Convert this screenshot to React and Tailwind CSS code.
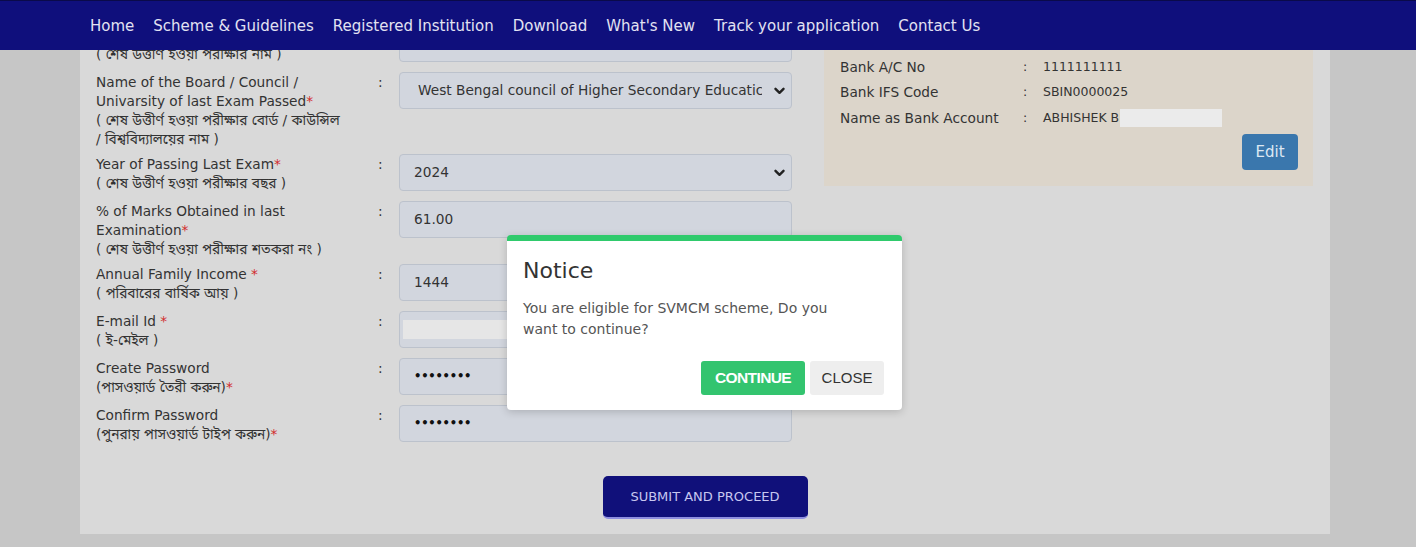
import React from "react";

const Star = () => <span className="text-[#d12b2b]">*</span>;

function Chevron() {
  return (
    <svg width="11" height="8" viewBox="0 0 11 8" className="shrink-0">
      <path d="M1.5 1.8 L5.5 5.8 L9.5 1.8" fill="none" stroke="#222" strokeWidth="2.4" strokeLinecap="round" strokeLinejoin="round" />
    </svg>
  );
}

function Field({ kind, value, redact, pl = "pl-[14px]" }) {
  if (kind === "select") {
    return (
      <div className={`h-[37px] rounded-[4px] border border-[#bcc2cc] bg-[#d2d6de] flex items-center ${pl} pr-[6px] text-[#333]`}>
        <span className="w-[344px] whitespace-nowrap overflow-hidden">{value}</span>
        <span className="flex-1" />
        <Chevron />
      </div>
    );
  }
  if (kind === "password") {
    return (
      <div className="h-[37px] rounded-[4px] border border-[#bcc2cc] bg-[#d2d6de] flex items-center pl-[14px] text-[#111] text-[11.5px] font-bold tracking-[-0.2px]">
        ••••••••
      </div>
    );
  }
  return (
    <div className="h-[37px] rounded-[4px] border border-[#bcc2cc] bg-[#d2d6de] flex items-center pl-[14px] text-[#333]">
      {redact ? <div className="w-[106px] h-[19px] bg-[#e6e6e6] -ml-[11px]" /> : value}
    </div>
  );
}

function Row({ lines, field, hideColon }) {
  return (
    <div className="grid grid-cols-[284px_19px_393px] mb-[6px]">
      <div className="text-[#333] translate-y-[1px]">
        {lines.map((l, i) => (
          <div key={i} className="h-[19px] leading-[19px] whitespace-nowrap overflow-visible">
            {l}
          </div>
        ))}
      </div>
      <div className="h-[19px] leading-[19px] text-[#333] -ml-[2px] translate-y-[1px]">{hideColon ? "" : ":"}</div>
      <div className="pb-[4px]">{field}</div>
    </div>
  );
}

export default function App() {
  const nav = [
    "Home",
    "Scheme & Guidelines",
    "Registered Institution",
    "Download",
    "What's New",
    "Track your application",
    "Contact Us",
  ];
  const font = "font-['DejaVu_Sans','Noto_Sans_Bengali','Noto_Sans',sans-serif]";
  return (
    <div className={`w-[1420px] h-[556px] bg-white overflow-hidden ${font}`}>
      <div className="w-[1416px] h-[547px] bg-[#c6c6c6] flex flex-col relative">
        <div className="h-[50px] shrink-0 bg-[#0f0f7c] border-t border-[#0a0a4a] flex items-center pl-[90px] gap-[19px] text-[15px] text-[#e2e2f2] pt-[1px]">
          {nav.map((n) => (
            <span key={n} className="whitespace-nowrap">{n}</span>
          ))}
        </div>

        <div className="ml-[80px] w-[1250px] h-[484px] bg-[#d9d9d9] overflow-hidden text-[13.7px]">
          <div className="-mt-[25px] flex pl-[16px]">
            <div className="w-[696px]">
              <Row
                hideColon
                lines={["", "( শেষ উত্তীর্ণ হওয়া পরীক্ষার নাম )"]}
                field={<Field kind="input" value="" />}
              />
              <Row
                lines={[
                  "Name of the Board / Council /",
                  <>Univarsity of last Exam Passed<Star /></>,
                  "( শেষ উত্তীর্ণ হওয়া পরীক্ষার বোর্ড / কাউন্সিল",
                  "/ বিশ্ববিদ্যালয়ের নাম )",
                ]}
                field={<Field kind="select" pl="pl-[18px]" value="West Bengal council of Higher Secondary Educatic" />}
              />
              <Row
                lines={[
                  <>Year of Passing Last Exam<Star /></>,
                  "( শেষ উত্তীর্ণ হওয়া পরীক্ষার বছর )",
                ]}
                field={<Field kind="select" pl="pl-[14px]" value="2024" />}
              />
              <Row
                lines={[
                  "% of Marks Obtained in last",
                  <>Examination<Star /></>,
                  "( শেষ উত্তীর্ণ হওয়া পরীক্ষার শতকরা নং )",
                ]}
                field={<Field kind="input" value="61.00" />}
              />
              <Row
                lines={[
                  <>Annual Family Income <Star /></>,
                  "( পরিবারের বার্ষিক আয় )",
                ]}
                field={<Field kind="input" value="1444" />}
              />
              <Row
                lines={[<>E-mail Id <Star /></>, "( ই-মেইল )"]}
                field={<Field kind="input" redact />}
              />
              <Row
                lines={["Create Password", <>(পাসওয়ার্ড তৈরী করুন)<Star /></>]}
                field={<Field kind="password" />}
              />
              <Row
                lines={["Confirm Password", <>(পুনরায় পাসওয়ার্ড টাইপ করুন)<Star /></>]}
                field={<Field kind="password" />}
              />
            </div>

            <div className="ml-[32px] w-[489px] self-start bg-[#dcd5ca] pt-[30px] pb-[16px] pl-[16px] pr-[15px]">
              <div className="flex items-center h-[25px] text-[#333]">
                <span className="w-[183px]">Bank A/C No</span>
                <span className="w-[20px] text-[12.5px]">:</span>
                <span className="text-[12.5px]">1111111111</span>
              </div>
              <div className="flex items-center h-[24px] text-[#333]">
                <span className="w-[183px]">Bank IFS Code</span>
                <span className="w-[20px] text-[12.5px]">:</span>
                <span className="text-[12.5px]">SBIN0000025</span>
              </div>
              <div className="flex items-center h-[28px] text-[#333]">
                <span className="w-[183px]">Name as Bank Account</span>
                <span className="w-[20px] text-[12.5px]">:</span>
                <span className="text-[12.5px]">ABHISHEK BI</span>
                <span className="inline-block w-[102px] h-[18px] bg-[#ebebeb] -ml-[3px]" />
              </div>
              <div className="flex justify-end mt-[2px]">
                <button className="w-[56px] h-[36px] rounded-[4px] bg-[#3a77ad] text-[#dde8f3] text-[15px]">Edit</button>
              </div>
            </div>
          </div>

          <div className="flex justify-center mt-[24px]">
            <button className="w-[205px] h-[43px] rounded-[5px] bg-[#10107a] text-[#c7c7f0] text-[13px] border-b-2 border-[#8f8fe0]">
              SUBMIT AND PROCEED
            </button>
          </div>
        </div>

        <div className="absolute left-[507px] top-[235px] w-[395px] h-[175px] bg-white rounded-[4px] border-t-[6px] border-[#2fca6c] shadow-[0_2px_8px_rgba(0,0,0,0.18)] px-[16px] pt-[16px]">
          <div className="text-[22px] leading-[28px] text-[#333]">Notice</div>
          <div className="mt-[13px] text-[14px] leading-[21px] text-[#555]">
            You are eligible for SVMCM scheme, Do you
            <br />
            want to continue?
          </div>
          <div className="flex justify-end gap-[5px] mt-[21px] mr-[2px]">
            <button className="h-[34px] w-[104px] rounded-[3px] bg-[#33c46f] text-white font-bold text-[15.5px] tracking-[-0.6px] font-['Liberation_Sans',Arial,sans-serif]">
              CONTINUE
            </button>
            <button className="h-[34px] w-[74px] rounded-[3px] bg-[#eeeeee] text-[#333] text-[15px] font-['Liberation_Sans',Arial,sans-serif]">
              CLOSE
            </button>
          </div>
        </div>
      </div>
    </div>
  );
}
